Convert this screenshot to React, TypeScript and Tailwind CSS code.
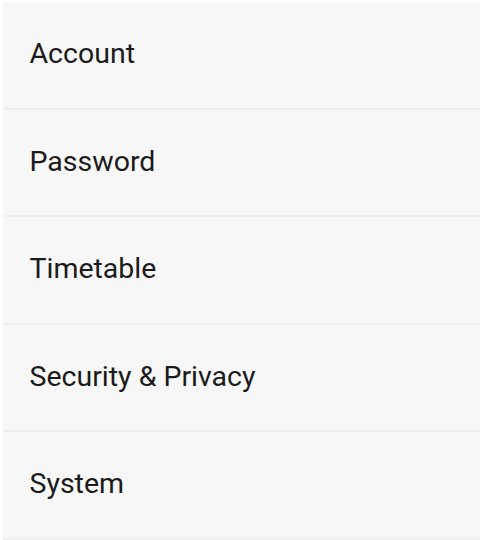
import React from 'react';

const items = ['Account', 'Password', 'Timetable', 'Security & Privacy', 'System'];

const App: React.FC = () => {
  return (
    <div className="w-[480px] h-[540px] overflow-hidden bg-white pt-[2px] pl-[3px]">
      <ul className="bg-[#f7f7f7]">
        {items.map((item) => (
          <li
            key={item}
            className="flex items-center h-[107.5px] border-b-2 border-[#efefef] pl-[26.5px] text-[28.5px] text-[#1b1b1b]"
            style={{ fontFamily: 'Roboto, sans-serif' }}
          >
            {item}
          </li>
        ))}
      </ul>
    </div>
  );
};

export default App;
